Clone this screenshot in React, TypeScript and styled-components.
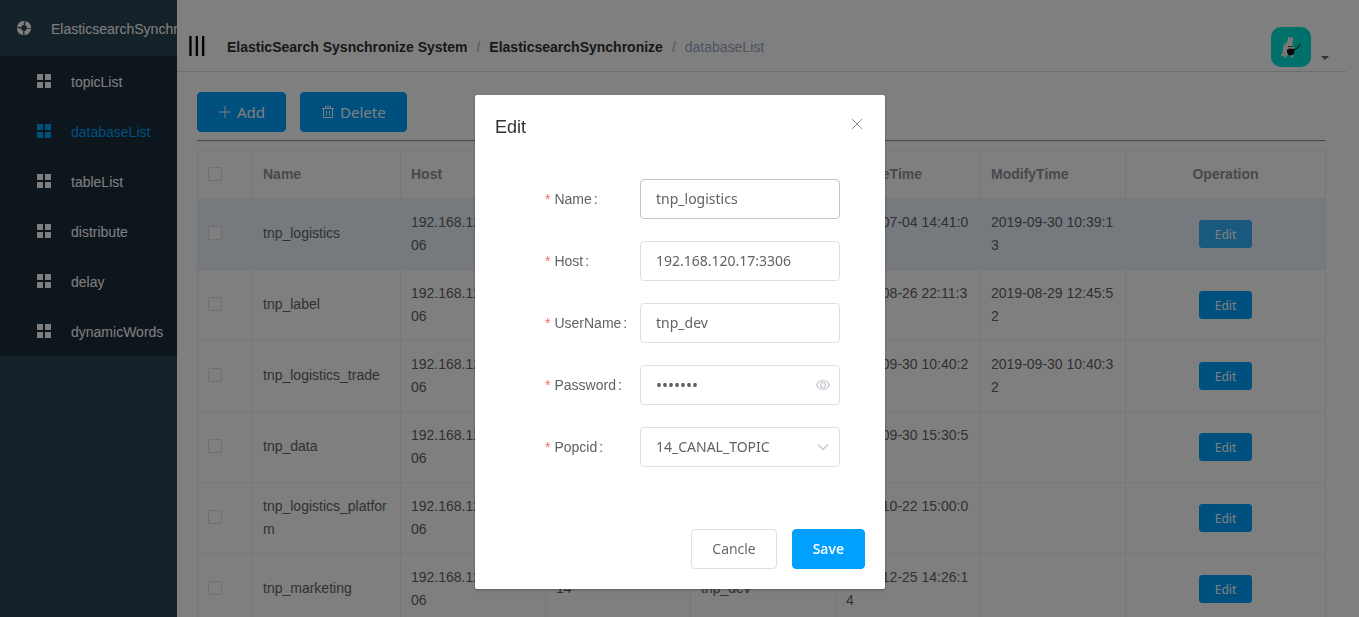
import React from "react";
import styled, { createGlobalStyle, css } from "styled-components";

const sans = '"Liberation Sans", Arial, sans-serif';
const ui = '"Noto Sans", "Open Sans", sans-serif';

const GlobalStyle = createGlobalStyle`
  *, *::before, *::after { box-sizing: border-box; }
  html, body, #root { height: 100%; }
  body { margin: 0; overflow: hidden; background: #fff; color: #303133; font: 14px/20px ${sans}; }
  button, input, select { font-family: ${ui}; }
`;

const Layout = styled.div`
  display: flex;
  height: 100vh;
  overflow: hidden;
`;

const Sidebar = styled.aside`
  flex: 0 0 177px;
  overflow: hidden;
  background: #2d4454;
`;

const MenuTitle = styled.div`
  display: flex;
  align-items: center;
  gap: 20px;
  height: 56px;
  padding: 2px 0 0 17px;
  color: #fff;
  white-space: nowrap;
  svg { flex: none; margin-bottom: 2px; }
`;

const SubMenu = styled.ul`
  margin: 0;
  padding: 0;
  list-style: none;
  background: #1a2b3a;
`;

const MenuLink = styled.a<{ $active?: boolean }>`
  display: flex;
  align-items: center;
  gap: 20px;
  height: 50px;
  padding: 2px 0 0 37px;
  color: ${(p) => (p.$active ? "#00a0ff" : "#fff")};
  text-decoration: none;
  white-space: nowrap;
  svg { flex: none; margin-bottom: 2px; }
`;

const Main = styled.main`
  flex: 1;
  min-width: 0;
`;

const Header = styled.header`
  display: flex;
  align-items: center;
  height: 72px;
  margin-right: 13px;
  padding: 22px 17px 0 12px;
  border-bottom: 1px solid #d8dce5;
`;

const PlainButton = styled.button`
  display: flex;
  padding: 0;
  border: 0;
  background: none;
  color: inherit;
  cursor: pointer;
`;

const MenuToggle = styled(PlainButton)`
  padding-bottom: 2px;
`;

const Breadcrumb = styled.nav`
  display: flex;
  flex: 1;
  margin-left: 22px;
  white-space: nowrap;
`;

const Crumb = styled.a`
  color: #303133;
  font-weight: 700;
  text-decoration: none;
`;

const CurrentCrumb = styled.span`
  color: #97a8be;
`;

const Separator = styled.span`
  margin: 0 9px;
  color: #c0c4cc;
  font-weight: 700;
`;

const UserMenu = styled(PlainButton)`
  align-items: flex-end;
  gap: 10px;
`;

const Content = styled.section`
  padding: 20px 33px 0 20px;
`;

const Toolbar = styled.div`
  display: flex;
  gap: 14px;
`;

const Button = styled.button<{ $variant?: "primary" | "plain"; $small?: boolean; $hover?: boolean }>`
  display: inline-flex;
  align-items: center;
  justify-content: center;
  gap: 5px;
  height: 40px;
  padding: 0 20px;
  border: 1px solid #00a0ff;
  border-radius: 4px;
  background: #00a0ff;
  color: #fff;
  font-size: 14px;
  line-height: 20px;
  cursor: pointer;
  ${(p) => p.$variant === "plain" && css`
    border-color: #dcdfe6;
    background: #fff;
    color: #606266;
  `}
  ${(p) => p.$small && css`
    height: 28px;
    padding: 2px 15px 0;
    border-radius: 3px;
    font-size: 12px;
  `}
  ${(p) => p.$hover && css`
    border-color: #33b3ff;
    background: #33b3ff;
  `}
`;

const ToolbarButton = styled(Button)`
  font-size: 15px;
`;

const Rule = styled.hr`
  height: 2px;
  margin: 8px 0;
  border: 0;
  border-top: 1px solid #9a9a9a;
  border-bottom: 1px solid #eee;
`;

const Table = styled.table`
  width: 100%;
  table-layout: fixed;
  border-collapse: separate;
  border-spacing: 0;
  border-top: 1px solid #ebeef5;
  border-left: 1px solid #ebeef5;
  color: #606266;
  line-height: 23px;
`;

const Col = styled.col<{ $width?: number }>`
  ${(p) => p.$width && `width: ${p.$width}px;`}
`;

const cell = css<{ $center?: boolean }>`
  padding: 12px 10px;
  border-right: 1px solid #ebeef5;
  border-bottom: 1px solid #ebeef5;
  text-align: ${(p) => (p.$center ? "center" : "left")};
  word-break: break-all;
`;

const Th = styled.th`
  ${cell}
  color: #909399;
`;

const Td = styled.td`
  ${cell}
  height: 71px;
  padding-top: 11px;
`;

const Row = styled.tr<{ $current?: boolean }>`
  background: ${(p) => (p.$current ? "#ecf5ff" : "#fff")};
`;

const Checkbox = styled.input.attrs({ type: "checkbox" })`
  display: block;
  width: 14px;
  height: 14px;
  margin: 0 0 1px;
  appearance: none;
  border: 1px solid #dcdfe6;
  border-radius: 2px;
  background: #fff;
  &:checked { background: #00a0ff; border-color: #00a0ff; }
`;

const Overlay = styled.div`
  position: fixed;
  inset: 0;
  display: flex;
  align-items: flex-start;
  justify-content: center;
  padding: 95px 0 0 1px;
  background: rgba(0, 0, 0, 0.5);
`;

const Dialog = styled.form`
  width: 410px;
  max-width: 100%;
  border-radius: 2px;
  background: #fff;
  box-shadow: 0 1px 3px rgba(0, 0, 0, 0.3);
`;

const DialogHeader = styled.div`
  display: flex;
  justify-content: space-between;
  padding: 20px 20px 10px;
`;

const DialogTitle = styled.h2`
  margin: 0;
  color: #303133;
  font-size: 18px;
  font-weight: 400;
  line-height: 24px;
`;

const CloseButton = styled(PlainButton)`
  height: 18px;
  align-items: center;
  padding-right: 2px;
  color: #909399;
`;

const DialogBody = styled.div`
  display: grid;
  gap: 22px;
  padding: 30px 45px 52px 70px;
`;

const Field = styled.div`
  display: grid;
  grid-template-columns: 95px 1fr;
  align-items: center;
`;

const Label = styled.label`
  color: #606266;
  line-height: 40px;
  &::before { content: "*"; margin-right: 4px; color: #f56c6c; }
`;

const Colon = styled.span`
  padding-left: 2px;
`;

const Control = styled.div`
  position: relative;
`;

const fieldBox = css<{ $hover?: boolean }>`
  display: block;
  width: 100%;
  height: 40px;
  padding: 0 15px 2px;
  border: 1px solid ${(p) => (p.$hover ? "#c0c4cc" : "#dcdfe6")};
  border-radius: 4px;
  outline: none;
  appearance: none;
  background: #fff;
  color: #606266;
  font-size: 14px;
`;

const Input = styled.input`${fieldBox}`;
const Select = styled.select`${fieldBox}`;
const PasswordInput = styled(Input)`
  padding-bottom: 0;
  font-size: 16px;
`;

const Suffix = styled.span`
  position: absolute;
  top: 0;
  right: 9px;
  display: flex;
  align-items: center;
  height: 40px;
  color: #c0c4cc;
  pointer-events: none;
`;

const DialogFooter = styled.div`
  display: flex;
  justify-content: flex-end;
  gap: 15px;
  padding: 10px 20px 20px;
`;

const FooterButton = styled(Button)`
  font-family: "Open Sans", sans-serif;
  font-weight: ${(p) => (p.$variant === "plain" ? 400 : 600)};
`;

const RingIcon = () => (
  <svg width="14" height="14" viewBox="0 0 14 14" fill="none" stroke="currentColor">
    <circle cx="7" cy="7" r="5" strokeWidth="4" strokeDasharray="6.354 1.5" strokeDashoffset="-0.75" />
    <circle cx="7" cy="7" r="6.5" strokeOpacity="0.5" />
  </svg>
);

const GridIcon = () => (
  <svg width="14" height="14" viewBox="0 0 14 14" fill="currentColor">
    <path d="M0 0h6v6H0zM8 0h6v6H8zM0 8h6v6H0zM8 8h6v6H8z" />
  </svg>
);

const BarsIcon = () => (
  <svg width="16" height="20" viewBox="0 0 16 20" fill="#000">
    <path d="M0.300 0h2.300v20h-2.300zM6.700 0h2.300v20h-2.300zM13 0h2.300v20h-2.300z" />
  </svg>
);

const PlusIcon = () => (
  <svg width="14" height="14" viewBox="0 0 14 14" stroke="currentColor">
    <path d="M7 1v12M1 7h12" />
  </svg>
);

const TrashIcon = () => (
  <svg width="14" height="14" viewBox="0 0 14 14" fill="none" stroke="currentColor">
    <path d="M1 3.500h12M4.500 3V1.500h5V3M2.500 3.500v9h9v-9M5.500 6v4.500M8.500 6v4.500" />
  </svg>
);

const CloseIcon = () => (
  <svg width="12" height="12" viewBox="0 0 12 12" stroke="currentColor">
    <path d="M1 1l10 10M11 1L1 11" />
  </svg>
);

const EyeIcon = () => (
  <svg width="16" height="12" viewBox="0 0 16 12" fill="none" stroke="currentColor" strokeWidth="1.2">
    <path d="M1.500 6C4.500 0 11.500 0 14.500 6C11.500 12 4.500 12 1.500 6z" />
    <circle cx="8" cy="6" r="2.500" />
  </svg>
);

const ChevronIcon = () => (
  <svg width="16" height="12" viewBox="0 0 16 12" fill="none" stroke="currentColor" strokeWidth="1.2">
    <path d="M3 3.500l5 5 5-5" />
  </svg>
);

const Avatar = () => (
  <svg width="40" height="40" viewBox="0 0 40 40">
    <rect width="40" height="40" rx="10" fill="#00e0d6" />
    <path d="M17 10l2 0.500 2.500-0.500 0.500 2-0.500 3.500 0 3 1.500 2v5l-1 2 0.500 3-1.500 0.500-1.500-3h-3l-2 3h-1.500l0.500-3-2.500 1.500-1-1 1.500-3 0.500-5 1-3 3-2.500 1-4z" fill="#f4eeee" />
    <path d="M16 22.500l2-0.500 0.500-1 1.500 1 2-0.500 1.500 1 2.500-2 3-3.500 0.500 0.500-3 4-3 2-0.500 3-2.500 2-3-0.500-1.500-2.500z" fill="#111" />
    <path d="M17 19.500h5" stroke="#111" strokeOpacity="0.7" />
  </svg>
);

const CaretIcon = () => (
  <svg width="8" height="14" viewBox="0 0 8 14" fill="#606266">
    <path d="M0 3h8L4 7z" />
  </svg>
);

const menu = ["topicList", "databaseList", "tableList", "distribute", "delay", "dynamicWords"];

const host = "192.168.120.17:3306";
const rows = [
  { name: "tnp_logistics", created: "2019-07-04 14:41:05", modified: "2019-09-30 10:39:13" },
  { name: "tnp_label", created: "2019-08-26 22:11:35", modified: "2019-08-29 12:45:52" },
  { name: "tnp_logistics_trade", created: "2019-09-30 10:40:25", modified: "2019-09-30 10:40:32" },
  { name: "tnp_data", created: "2019-09-30 15:30:54", modified: "" },
  { name: "tnp_logistics_platform", created: "2019-10-22 15:00:04", modified: "" },
  { name: "tnp_marketing", created: "2019-12-25 14:26:14", modified: "" },
];

function DatabaseTable() {
  return (
    <Table>
      <colgroup>
        <Col $width={55} />
        <Col />
        <Col $width={145} />
        <Col $width={145} />
        <Col $width={145} />
        <Col $width={145} />
        <Col $width={145} />
        <Col $width={200} />
      </colgroup>
      <thead>
        <tr>
          <Th><Checkbox aria-label="Select all" /></Th>
          <Th>Name</Th>
          <Th>Host</Th>
          <Th>Popcid</Th>
          <Th>UserName</Th>
          <Th>CreateTime</Th>
          <Th>ModifyTime</Th>
          <Th $center>Operation</Th>
        </tr>
      </thead>
      <tbody>
        {rows.map((row, i) => (
          <Row key={row.name} $current={i === 0}>
            <Td><Checkbox aria-label={`Select ${row.name}`} /></Td>
            <Td>{row.name}</Td>
            <Td>{host}</Td>
            <Td>14</Td>
            <Td>tnp_dev</Td>
            <Td>{row.created}</Td>
            <Td>{row.modified}</Td>
            <Td $center><Button type="button" $small $hover={i === 0}>Edit</Button></Td>
          </Row>
        ))}
      </tbody>
    </Table>
  );
}

function FieldLabel({ id, children }: { id: string; children: string }) {
  return <Label htmlFor={id}>{children}<Colon>:</Colon></Label>;
}

function EditDialog() {
  return (
    <Overlay>
      <Dialog role="dialog" aria-labelledby="dialog-title" onSubmit={(e) => e.preventDefault()}>
        <DialogHeader>
          <DialogTitle id="dialog-title">Edit</DialogTitle>
          <CloseButton type="button" aria-label="Close"><CloseIcon /></CloseButton>
        </DialogHeader>
        <DialogBody>
          <Field>
            <FieldLabel id="name">Name</FieldLabel>
            <Input id="name" defaultValue="tnp_logistics" $hover />
          </Field>
          <Field>
            <FieldLabel id="host">Host</FieldLabel>
            <Input id="host" defaultValue={host} />
          </Field>
          <Field>
            <FieldLabel id="user">UserName</FieldLabel>
            <Input id="user" defaultValue="tnp_dev" />
          </Field>
          <Field>
            <FieldLabel id="password">Password</FieldLabel>
            <Control>
              <PasswordInput id="password" type="password" defaultValue="tnp_dev" />
              <Suffix><EyeIcon /></Suffix>
            </Control>
          </Field>
          <Field>
            <FieldLabel id="popcid">Popcid</FieldLabel>
            <Control>
              <Select id="popcid"><option>14_CANAL_TOPIC</option></Select>
              <Suffix><ChevronIcon /></Suffix>
            </Control>
          </Field>
        </DialogBody>
        <DialogFooter>
          <FooterButton type="button" $variant="plain">Cancle</FooterButton>
          <FooterButton type="submit">Save</FooterButton>
        </DialogFooter>
      </Dialog>
    </Overlay>
  );
}

export default function App() {
  return (
    <>
      <GlobalStyle />
      <Layout>
        <Sidebar>
          <MenuTitle><RingIcon />ElasticsearchSynchronize</MenuTitle>
          <SubMenu>
            {menu.map((item) => (
              <li key={item}>
                <MenuLink href={`#${item}`} $active={item === "databaseList"}><GridIcon />{item}</MenuLink>
              </li>
            ))}
          </SubMenu>
        </Sidebar>
        <Main>
          <Header>
            <MenuToggle type="button" aria-label="Toggle menu"><BarsIcon /></MenuToggle>
            <Breadcrumb aria-label="Breadcrumb">
              <Crumb href="#home">ElasticSearch Sysnchronize System</Crumb>
              <Separator>/</Separator>
              <Crumb href="#sync">ElasticsearchSynchronize</Crumb>
              <Separator>/</Separator>
              <CurrentCrumb>databaseList</CurrentCrumb>
            </Breadcrumb>
            <UserMenu type="button" aria-label="Account"><Avatar /><CaretIcon /></UserMenu>
          </Header>
          <Content>
            <Toolbar>
              <ToolbarButton type="button"><PlusIcon />Add</ToolbarButton>
              <ToolbarButton type="button"><TrashIcon />Delete</ToolbarButton>
            </Toolbar>
            <Rule />
            <DatabaseTable />
          </Content>
        </Main>
      </Layout>
      <EditDialog />
    </>
  );
}
